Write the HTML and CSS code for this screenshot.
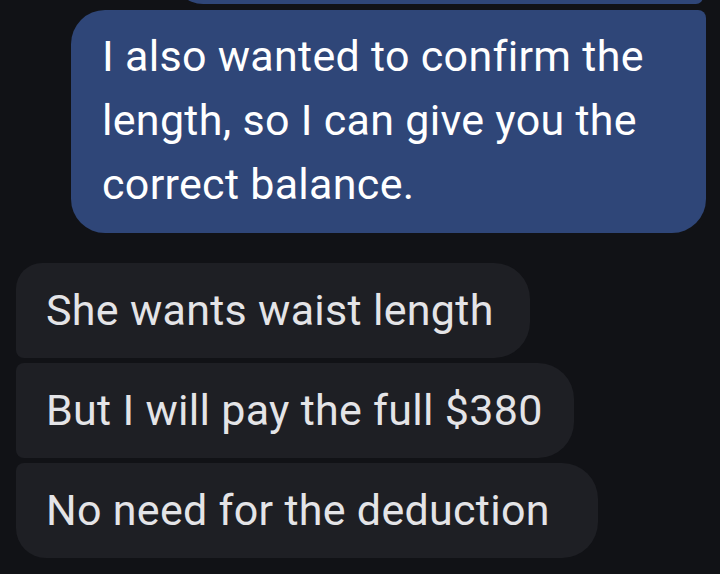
FILE: index.html
```html
<!DOCTYPE html>
<html lang="en">
<head>
<meta charset="utf-8">
<title>Messages</title>
<link rel="stylesheet" href="styles.css">
</head>
<body>
<main class="thread">
  <div class="bubble sent prev"></div>
  <div class="bubble sent main-sent">I also wanted to confirm the length, so I can give you the correct balance.</div>
  <div class="group">
    <div class="bubble recv first">She wants waist length</div>
    <div class="bubble recv middle">But I will pay the full $380</div>
    <div class="bubble recv last">No need for the deduction</div>
  </div>
</main>
</body>
</html>
```

FILE: styles.css
```css
html, body {
  margin: 0;
  padding: 0;
  background: #111216;
  height: 100%;
  overflow: hidden;
}

.thread {
  display: flex;
  flex-direction: column;
  font-family: Roboto, "Noto Sans", sans-serif;
  font-size: 43px;
  letter-spacing: 0.3px;
  line-height: 64px;
  padding: 0 14px 0 16px;
}

.bubble {
  box-sizing: border-box;
}

.sent {
  align-self: flex-end;
  background: #2f4678;
  color: #ffffff;
}

.prev {
  width: 530px;
  height: 60px;
  margin-top: -56px;
  margin-right: 3px;
  border-radius: 34px 8px 8px 34px;
}

.main-sent {
  width: 635px;
  margin-top: 6px;
  padding: 14px 28px 17px 31px;
  border-radius: 34px 8px 34px 34px;
}

.group {
  display: flex;
  flex-direction: column;
  align-items: flex-start;
  gap: 5px;
  margin-top: 30px;
}

.recv {
  background: #1e1f24;
  color: #e4e4e7;
  padding: 15px 40px 16px 30px;
  white-space: nowrap;
}

.first {
  padding-right: 36px;
  border-radius: 26px 36px 36px 8px;
}

.middle {
  padding-right: 31px;
  border-radius: 8px 36px 36px 8px;
}

.last {
  padding-right: 48px;
  border-radius: 8px 36px 36px 30px;
}
```
